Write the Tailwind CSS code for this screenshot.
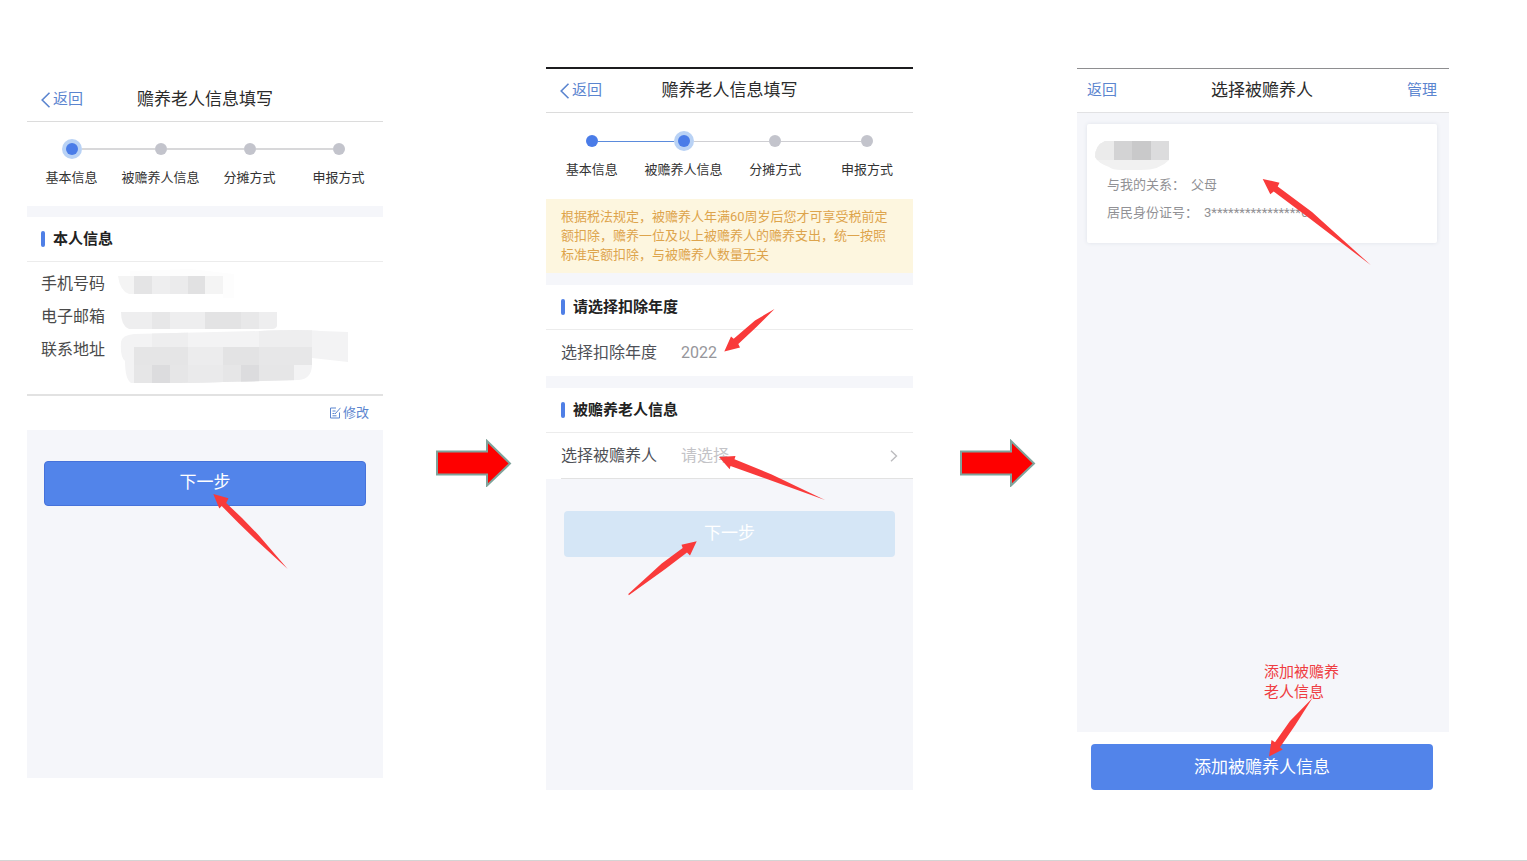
<!DOCTYPE html>
<html lang="zh-CN">
<head>
    <meta charset="UTF-8">
    <meta name="viewport" content="width=device-width, initial-scale=1.0">
    <title>赡养老人信息填写</title>
    <script src="https://cdn.jsdelivr.net/npm/@tailwindcss/browser@4"></script>
</head>
<body class="bg-white font-['Roboto','Noto_Sans_CJK_SC',sans-serif] text-[#333]">
  <main class="min-h-screen border-b border-[#d4d4d4] grid grid-cols-[356fr_163fr_367fr_164fr_372fr] items-start pl-[27px] pr-[78px]">

    <!-- Step 1: personal info -->
    <section class="relative mt-[78px] h-[700px] bg-[#f5f6fa] flex flex-col">
      <header class="h-11 bg-white border-b border-[#dcdcdc] grid grid-cols-[1fr_auto_1fr] items-center px-[14px]">
        <a href="#" class="flex items-center gap-[2px] text-[15px] text-[#5b85cf]">
          <svg class="w-[10px] h-4" viewBox="0 0 10 16" fill="none" stroke="#5b85cf" stroke-width="1.6"><path d="M8.500 .8L1.200 8l7.300 7.200"/></svg>返回</a>
        <h1 class="text-[17px] text-[#2b2b2b]">赡养老人信息填写</h1>
      </header>
      <ol class="h-[84px] bg-white grid grid-cols-4 pt-[17px] text-[13px] leading-5 text-center whitespace-nowrap">
        <li class="flex flex-col items-center">
          <div class="w-full h-5 flex items-center"><span class="flex-1"></span><span class="size-5 rounded-full bg-[#b9d2f5] p-1"><span class="block size-3 rounded-full bg-[#4a7ce8]"></span></span><span class="flex-1 h-[2px] bg-[#d8d8da]"></span></div>
          <span class="mt-[9px]">基本信息</span>
        </li>
        <li class="flex flex-col items-center">
          <div class="w-full h-5 flex items-center"><span class="flex-1 h-[2px] bg-[#d8d8da]"></span><span class="size-3 rounded-full bg-[#c3c4cc]"></span><span class="flex-1 h-[2px] bg-[#d8d8da]"></span></div>
          <span class="mt-[9px]">被赡养人信息</span>
        </li>
        <li class="flex flex-col items-center">
          <div class="w-full h-5 flex items-center"><span class="flex-1 h-[2px] bg-[#d8d8da]"></span><span class="size-3 rounded-full bg-[#c3c4cc]"></span><span class="flex-1 h-[2px] bg-[#d8d8da]"></span></div>
          <span class="mt-[9px]">分摊方式</span>
        </li>
        <li class="flex flex-col items-center">
          <div class="w-full h-5 flex items-center"><span class="flex-1 h-[2px] bg-[#d8d8da]"></span><span class="size-3 rounded-full bg-[#c3c4cc]"></span><span class="flex-1"></span></div>
          <span class="mt-[9px]">申报方式</span>
        </li>
      </ol>
      <h2 class="mt-[11px] h-[45px] bg-white border-b border-[#ececec] flex items-center gap-2 px-[14px] text-[15px] font-bold text-[#222]"><span class="w-1 h-4 rounded-full bg-[#4f7fe6]"></span>本人信息</h2>
      <div class="h-[134px] bg-white border-b-2 border-[#e2e2e2] flex pl-[14px]">
        <ul class="w-[77px] pt-[5px] text-[16px] leading-[33px] text-[#4a4a4a]">
          <li>手机号码</li>
          <li>电子邮箱</li>
          <li>联系地址</li>
        </ul>
        <!-- masked values -->
        <svg class="w-[232px] h-[132px]" viewBox="118 262 232 132">
          <clipPath id="phone"><path d="M118 276H223V294H129Q120 291 118 276Z"/></clipPath>
          <clipPath id="mail"><path d="M121 312H277V326Q276 329 272 329H129Q121 326 121 312Z"/></clipPath>
          <clipPath id="addr"><path d="M121 342Q122 335 134 334L260 331Q300 329 321 331L348 332V362L312 358V366Q311 379 299 380L224 382L180 383H131Q125 379 125 361Q120 357 121 342Z"/></clipPath>
          <path d="M130 271L190 269L234 274V298H223V276H130Z" fill="#fdfdfd"/>
          <g clip-path="url(#phone)" shape-rendering="crispEdges">
            <path fill="#f4f4f4" d="M118 276h105v18h-105z"/>
            <path fill="#e4e4e5" d="M134 276h18v18h-18z"/>
            <path fill="#eeeeef" d="M152 276h18v18h-18z"/>
            <path fill="#ebebec" d="M170 276h18v18h-18z"/>
            <path fill="#e1e1e2" d="M188 276h17v18h-17z"/>
          </g>
          <g clip-path="url(#mail)" shape-rendering="crispEdges">
            <path fill="#eeeeef" d="M118 312h160v17h-160z"/>
            <path fill="#e7e7e8" d="M152 312h18v17h-18z"/>
            <path fill="#e3e3e4" d="M205 312h36v17h-36z"/>
            <path fill="#e8e8e9" d="M241 312h18v17h-18z"/>
          </g>
          <g clip-path="url(#addr)" shape-rendering="crispEdges">
            <path fill="#f3f3f4" d="M118 328h232v58h-232z"/>
            <path fill="#eeeeef" d="M152 328h36v19h-36zM259 328h53v19h-53z"/>
            <path fill="#e5e5e6" d="M134 347h54v18h-54z"/>
            <path fill="#ececed" d="M188 347h35v18h-35z"/>
            <path fill="#e3e3e4" d="M223 347h36v18h-36z"/>
            <path fill="#e7e7e8" d="M259 347h53v18h-53z"/>
            <path fill="#e6e6e7" d="M134 365h160v18h-160z"/>
            <path fill="#dcdcde" d="M152 365h18v18h-18zM241 365h18v18h-18z"/>
            <path fill="#eaeaeb" d="M188 365h35v18h-35z"/>
          </g>
        </svg>
      </div>
      <div class="h-[34px] bg-white flex items-center justify-end px-[14px]">
        <button type="button" class="flex items-center gap-[2px] text-[13px] text-[#5b85cf]">
          <svg class="size-3" viewBox="0 0 12 12" fill="none" stroke="#5b85cf" stroke-width="1"><path d="M7 1H1.500v10h9V5.500M3.500 4h3M3.500 6.500h2M6 7L11.500 .8M3.500 8.800h4"/></svg>修改</button>
      </div>
      <button type="button" class="mx-[17px] mt-[31px] h-[45px] pb-px rounded-[4px] border border-[#4672da] bg-[#5284ea] text-[17px] text-white">下一步</button>
      <svg class="absolute left-[186px] top-[415px] w-[76px] h-[78px]" viewBox="213 493 76 78" fill="#f93a3a"><path d="M213.300 494L228.500 498.300L226.200 503L242 518L258.500 535L287.700 569L255 539L238.500 523L221.700 506L219.300 508.500Z"/></svg>
    </section>

    <div class="mt-[439px] pl-[53px]">
      <svg class="w-[76px] h-12" viewBox="0 0 76 48" fill="#fe0000" stroke="#7fa39b" stroke-width="2"><path d="M1 12.500H51V2L74 24.500L51 46.500V35.500H1Z"/></svg>
    </div>

    <!-- Step 2: choose year and dependant -->
    <section class="relative mt-[67px] h-[723px] bg-[#f5f6fa] border-t-2 border-[#1c1c1e] flex flex-col">
      <header class="h-11 bg-white border-b border-[#dcdcdc] grid grid-cols-[1fr_auto_1fr] items-center px-[14px]">
        <a href="#" class="flex items-center gap-[2px] text-[15px] text-[#5b85cf]">
          <svg class="w-[10px] h-4" viewBox="0 0 10 16" fill="none" stroke="#5b85cf" stroke-width="1.6"><path d="M8.500 .8L1.200 8l7.300 7.200"/></svg>返回</a>
        <h1 class="text-[17px] text-[#2b2b2b]">赡养老人信息填写</h1>
      </header>
      <ol class="h-[86px] bg-white grid grid-cols-4 pt-[18px] text-[13px] leading-5 text-center whitespace-nowrap">
        <li class="flex flex-col items-center">
          <div class="w-full h-5 flex items-center"><span class="flex-1"></span><span class="size-3 rounded-full bg-[#4a7ce8]"></span><span class="flex-1 h-px bg-[#5b8bdc]"></span></div>
          <span class="mt-[9px]">基本信息</span>
        </li>
        <li class="flex flex-col items-center">
          <div class="w-full h-5 flex items-center"><span class="flex-1 h-px bg-[#5b8bdc]"></span><span class="size-5 rounded-full bg-[#b9d2f5] p-1"><span class="block size-3 rounded-full bg-[#4a7ce8]"></span></span><span class="flex-1 h-px bg-[#cfcfd3]"></span></div>
          <span class="mt-[9px]">被赡养人信息</span>
        </li>
        <li class="flex flex-col items-center">
          <div class="w-full h-5 flex items-center"><span class="flex-1 h-px bg-[#cfcfd3]"></span><span class="size-3 rounded-full bg-[#c3c4cc]"></span><span class="flex-1 h-px bg-[#cfcfd3]"></span></div>
          <span class="mt-[9px]">分摊方式</span>
        </li>
        <li class="flex flex-col items-center">
          <div class="w-full h-5 flex items-center"><span class="flex-1 h-px bg-[#cfcfd3]"></span><span class="size-3 rounded-full bg-[#c3c4cc]"></span><span class="flex-1"></span></div>
          <span class="mt-[9px]">申报方式</span>
        </li>
      </ol>
      <p class="h-[74px] bg-[#fdf6df] pl-[15px] pr-[18px] pt-2 text-[13px] leading-[19px] text-[#dda44c]">根据税法规定，被赡养人年满60周岁后您才可享受税前定额扣除，赡养一位及以上被赡养人的赡养支出，统一按照标准定额扣除，与被赡养人数量无关</p>
      <h2 class="mt-3 h-[45px] bg-white border-b border-[#ececec] flex items-center gap-2 px-[15px] text-[15px] font-bold text-[#222]"><span class="w-1 h-4 rounded-full bg-[#4f7fe6]"></span>请选择扣除年度</h2>
      <div class="h-[46px] bg-white flex items-center px-[15px] text-[16px] text-[#4f5157]">
        <label for="year" class="w-[120px]">选择扣除年度</label>
        <select id="year" class="flex-1 h-full appearance-none bg-transparent text-[#96969b]">
          <option>2022</option>
        </select>
      </div>
      <h2 class="mt-3 h-[45px] bg-white border-b border-[#ececec] flex items-center gap-2 px-[15px] text-[15px] font-bold text-[#222]"><span class="w-1 h-4 rounded-full bg-[#4f7fe6]"></span>被赡养老人信息</h2>
      <div class="h-[46px] bg-white pl-[15px]">
        <div class="h-full border-b border-[#e2e2e2] flex items-center pr-[15px] text-[16px] text-[#4f5157]">
          <label for="dependant" class="w-[120px]">选择被赡养人</label>
          <select id="dependant" class="flex-1 h-full appearance-none bg-transparent text-[#c3c3c7]">
            <option>请选择</option>
          </select>
          <svg class="w-2 h-3" viewBox="0 0 8 12" fill="none" stroke="#bcbcbf" stroke-width="1.4"><path d="M1 .8L6.500 6L1 11.200"/></svg>
        </div>
      </div>
      <button type="button" class="mx-[18px] mt-8 h-[46px] pb-px rounded-[4px] bg-[#d5e6f6] text-[17px] text-white">下一步</button>
      <svg class="absolute left-[177px] top-[239px] w-[54px] h-[46px]" viewBox="723 308 54 46" fill="#f93a3a"><path d="M724.300 351.500L731 336.500L733.700 338.700L755 320.500L774.500 309L756.700 326.700L738.300 344L740 347.500Z"/></svg>
      <svg class="absolute left-[172px] top-[385px] w-[110px] h-[48px]" viewBox="718 454 110 48" fill="#f93a3a"><path d="M719 457L735.500 456L734.500 459.300L771.700 474.500L825 500L768.300 479.500L730.500 466L729.700 469.300Z"/></svg>
      <svg class="absolute left-[81px] top-[471px] w-[72px] h-[58px]" viewBox="627 540 72 58" fill="#f93a3a"><path d="M696.700 541.300L681.500 544.700L682.700 548L661.700 563.500L628.300 594L628.800 595.300L665 569.300L687 552.500L690 555.500Z"/></svg>
    </section>

    <div class="mt-[439px] pl-[47px]">
      <svg class="w-[76px] h-12" viewBox="0 0 76 48" fill="#fe0000" stroke="#7fa39b" stroke-width="2"><path d="M1 12.500H51V2L74 24.500L51 46.500V35.500H1Z"/></svg>
    </div>

    <!-- Step 3: dependant list -->
    <section class="relative mt-[68px] h-[722px] bg-[#f5f6fa] border-t border-[#8e8e90] flex flex-col">
      <header class="h-11 bg-white border-b border-[#e2e2e4] grid grid-cols-[1fr_auto_1fr] items-center pl-[10px] pr-3">
        <a href="#" class="text-[15px] text-[#5b85cf]">返回</a>
        <h1 class="text-[17px] text-[#2b2b2b]">选择被赡养人</h1>
        <a href="#" class="text-right text-[15px] text-[#5b85cf]">管理</a>
      </header>
      <article class="ml-[10px] mr-3 mt-[11px] h-[119px] rounded-[2px] bg-white shadow-[0_0_4px_#dfe2e9] pt-[17px] text-[13px] leading-7 text-[#919195]">
        <svg class="ml-2 w-[75px] h-[30px]" viewBox="1095 141 75 30">
          <clipPath id="name"><path d="M1105 141H1169V160Q1160 170 1141 170H1122Q1112 170 1109 167Q1098 163 1095 157Q1095 145 1105 141Z"/></clipPath>
          <g clip-path="url(#name)" shape-rendering="crispEdges">
            <path fill="#f1f1f1" d="M1095 141h75v30h-75z"/>
            <path fill="#ebebeb" d="M1095 141h19v19h-19z"/>
            <path fill="#d3d3d4" d="M1114 141h18v19h-18z"/>
            <path fill="#c9c9ca" d="M1132 141h19v19h-19z"/>
            <path fill="#dcdcdd" d="M1151 141h19v19h-19z"/>
          </g>
        </svg>
        <p class="flex gap-[6px] pl-5"><span>与我的关系：</span><span>父母</span></p>
        <p class="flex gap-[6px] pl-5"><span>居民身份证号：</span><span>3****************6</span></p>
      </article>
      <footer class="mt-auto bg-white pl-[14px] pr-4 pt-3 flex">
        <button type="button" class="flex-1 h-[46px] pt-px rounded-[4px] bg-[#5284ea] text-[17px] text-white">添加被赡养人信息</button>
      </footer>
      <p class="absolute left-[187px] top-[593px] text-[15px] leading-5 text-[#ef3d42]">添加被赡养<br>老人信息</p>
      <svg class="absolute left-[184px] top-[109px] w-[112px] h-[90px]" viewBox="1261 178 112 90" fill="#f93a3a"><path d="M1262.700 179L1279.500 182.700L1277.700 186.500L1312 212L1371 265.300L1307.700 217L1273.700 191.500L1270.300 194.300Z"/></svg>
      <svg class="absolute left-[191px] top-[627px] w-[46px] h-[62px]" viewBox="1268 696 46 62" fill="#f93a3a"><path d="M1269 756.500L1271.500 740L1275 742.300L1290 721L1312.500 698L1295 725.500L1280 747.300L1282.700 749.500Z"/></svg>
    </section>
  </main>
</body>
</html>
